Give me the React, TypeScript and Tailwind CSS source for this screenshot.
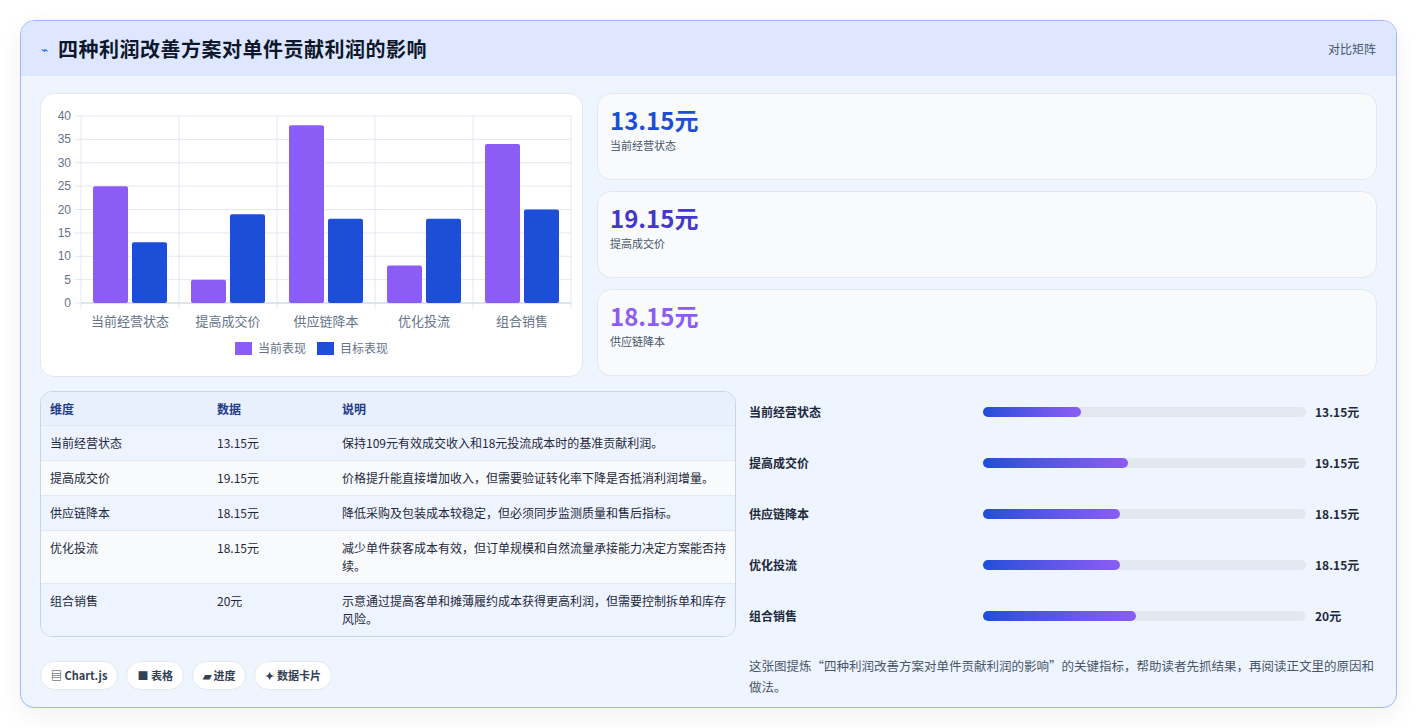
import React from "react";

const cats = ["当前经营状态", "提高成交价", "供应链降本", "优化投流", "组合销售"];
const cur = [25, 5, 38, 8, 34];
const tgt = [13, 19, 18, 18, 20];

function Chart() {
  const x0 = 40, x1 = 530, y0 = 22, y1 = 209;
  const gw = (x1 - x0) / 5;
  const ys = (v: number) => y1 - (v / 40) * (y1 - y0);
  return (
    <svg width="542" height="283" className="block">
      {[0, 5, 10, 15, 20, 25, 30, 35, 40].map((v) => (
        <g key={v}>
          <line x1={x0 - 6} x2={x1} y1={ys(v)} y2={ys(v)} stroke="#e2e8f0" />
          <text x={x0 - 10} y={ys(v) + 4} textAnchor="end" fontSize="12" fill="#64748b" fontFamily="Liberation Sans, sans-serif">{v}</text>
        </g>
      ))}
      {[0, 1, 2, 3, 4, 5].map((i) => (
        <line key={i} x1={x0 + i * gw} x2={x0 + i * gw} y1={y0} y2={y1 + 6} stroke="#e2e8f0" />
      ))}
      <line x1={x0} x2={x1} y1={y1} y2={y1} stroke="#cbd5e1" />
      {cats.map((c, i) => {
        const gx = x0 + i * gw;
        return (
          <g key={c}>
            <rect x={gx + 12} y={ys(cur[i])} width={35} height={y1 - ys(cur[i])} rx="2" fill="#8b5cf6" />
            <rect x={gx + 51} y={ys(tgt[i])} width={35} height={y1 - ys(tgt[i])} rx="2" fill="#1d4ed8" />
            <text x={gx + gw / 2} y={y1 + 23} textAnchor="middle" fontSize="13" fill="#64748b" fontFamily="Noto Sans CJK SC, sans-serif">{c}</text>
          </g>
        );
      })}
      <rect x="194" y="248" width="17" height="13" fill="#8b5cf6" />
      <text x="217" y="259" fontSize="12" fill="#64748b" fontFamily="Noto Sans CJK SC, sans-serif">当前表现</text>
      <rect x="276" y="248" width="17" height="13" fill="#1d4ed8" />
      <text x="299" y="259" fontSize="12" fill="#64748b" fontFamily="Noto Sans CJK SC, sans-serif">目标表现</text>
    </svg>
  );
}

const rows = [
  ["当前经营状态", "13.15元", "保持109元有效成交收入和18元投流成本时的基准贡献利润。"],
  ["提高成交价", "19.15元", "价格提升能直接增加收入，但需要验证转化率下降是否抵消利润增量。"],
  ["供应链降本", "18.15元", "降低采购及包装成本较稳定，但必须同步监测质量和售后指标。"],
  ["优化投流", "18.15元", "减少单件获客成本有效，但订单规模和自然流量承接能力决定方案能否持续。"],
  ["组合销售", "20元", "示意通过提高客单和摊薄履约成本获得更高利润，但需要控制拆单和库存风险。"],
];

const bars: [string, string, number][] = [
  ["当前经营状态", "13.15元", 98],
  ["提高成交价", "19.15元", 145],
  ["供应链降本", "18.15元", 137],
  ["优化投流", "18.15元", 137],
  ["组合销售", "20元", 153],
];

export default function App() {
  return (
    <div className="w-[1417px] h-[728px] bg-white pt-[20px] pl-[20px]" style={{ fontFamily: "'Noto Sans CJK SC', 'Noto Sans', sans-serif" }}>
      <div className="w-[1377px] h-[688px] rounded-[14px] border border-[#a5b4fc] bg-[#eff5ff] overflow-hidden shadow-[0_8px_24px_rgba(0,0,0,0.06)]">
        <div className="h-[55px] bg-[#dde7ff] flex items-center justify-between px-[20px]">
          <div className="flex items-center gap-[10px]">
            <span className="text-[#2563eb] text-[12px]">⌁</span>
            <span className="text-[20px] font-bold text-[#0f172a] tracking-[0.5px]">四种利润改善方案对单件贡献利润的影响</span>
          </div>
          <span className="text-[12px] text-[#475569]">对比矩阵</span>
        </div>
        <div className="px-[19px] pt-[17px]">
          <div className="flex gap-[14px]">
            <div className="w-[543px] h-[284px] bg-white rounded-[14px] border border-[#e2e8f0]">
              <Chart />
            </div>
            <div className="flex-1 flex flex-col gap-[11px]">
              {[["13.15元", "当前经营状态", "text-[#1d4ed8]"], ["19.15元", "提高成交价", "text-[#4338ca]"], ["18.15元", "供应链降本", "text-[#8b5cf6]"]].map(([v, l, c]) => (
                <div key={l} className="h-[87px] bg-[#f8fafc] rounded-[14px] border border-[#e2e8f0] px-[12px] pt-[10px]">
                  <div className={`text-[24px] font-bold leading-[32px] ${c}`}>{v}</div>
                  <div className="text-[11px] text-[#475569] mt-[1px]">{l}</div>
                </div>
              ))}
            </div>
          </div>
          <div className="flex gap-[13px] mt-[14px]">
            <div className="w-[696px]">
              <div className="rounded-[12px] border border-[#cbd5e1] overflow-hidden text-[12px] text-[#1e293b]">
                <div className="flex h-[34px] items-center bg-[#e8f0fd] font-bold text-[#1e3a8a] border-b border-[#e2e8f0]">
                  <div className="w-[176px] pl-[9px]">维度</div>
                  <div className="w-[125px]">数据</div>
                  <div className="flex-1">说明</div>
                </div>
                {rows.map((r, i) => (
                  <div key={i} className={`flex py-[9px] border-b border-[#e2e8f0] last:border-b-0 leading-[16px] ${i % 2 ? "bg-[#f8fafc]" : "bg-[#eef4ff]"}`}>
                    <div className="w-[176px] pl-[9px] shrink-0">{r[0]}</div>
                    <div className="w-[125px] shrink-0">{r[1]}</div>
                    <div className="flex-1 pr-[6px] leading-[18px] -my-[1px]">{r[2]}</div>
                  </div>
                ))}
              </div>
              <div className="flex gap-[8px] mt-[24px] text-[11px] font-bold text-[#334155]">
                {["▤ Chart.js", "■ 表格", "▰ 进度", "✦ 数据卡片"].map((t) => (
                  <span key={t} className="h-[29px] px-[10px] rounded-full bg-white border border-[#e2e8f0] flex items-center">{t}</span>
                ))}
              </div>
            </div>
            <div className="flex-1">
              <div className="flex flex-col gap-[33px] pt-[12px]">
                {bars.map(([l, v, w]) => (
                  <div key={l} className="flex items-center h-[18px] text-[12px] font-bold text-[#1e293b]">
                    <div className="w-[234px]">{l}</div>
                    <div className="w-[323px] h-[10px] rounded-full bg-[#e2e8f0]">
                      <div className="h-[10px] rounded-full bg-gradient-to-r from-[#1d4ed8] to-[#8b5cf6]" style={{ width: w }} />
                    </div>
                    <div className="pl-[9px]">{v}</div>
                  </div>
                ))}
              </div>
              <div className="mt-[30px] text-[12.5px] text-[#475569] leading-[21px]">
                这张图提炼“四种利润改善方案对单件贡献利润的影响”的关键指标，帮助读者先抓结果，再阅读正文里的原因和做法。
              </div>
            </div>
          </div>
        </div>
      </div>
    </div>
  );
}
